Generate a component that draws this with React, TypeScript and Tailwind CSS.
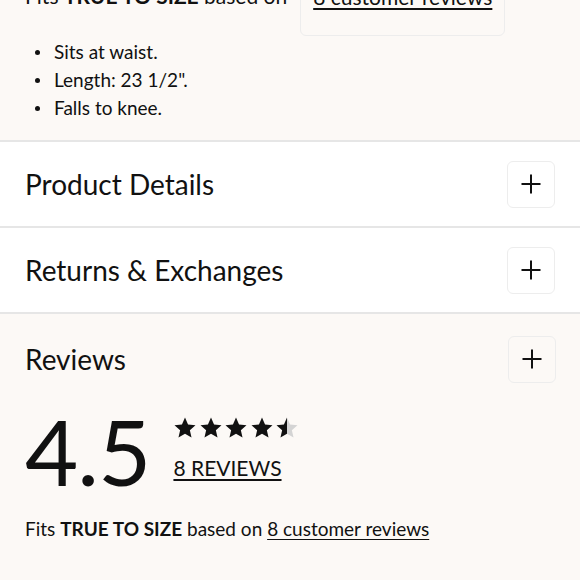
import React from 'react'

const STAR = 'M12 1.6l3.05 6.9 7.45.72-5.63 4.98 1.66 7.36L12 17.7l-6.53 3.86 1.66-7.36L1.5 9.22l7.45-.72z'

function Star({ fill }: { fill: 'full' | 'half' }) {
  return (
    <svg width="24" height="24" viewBox="0 0 24 24" aria-hidden>
      {fill === 'half' ? (
        <>
          <defs>
            <linearGradient id="half-star">
              <stop offset="50%" stopColor="#111111" />
              <stop offset="50%" stopColor="#d4d4d4" />
            </linearGradient>
          </defs>
          <path d={STAR} fill="url(#half-star)" />
        </>
      ) : (
        <path d={STAR} fill="#111111" />
      )}
    </svg>
  )
}

function PlusButton({ tinted }: { tinted?: boolean }) {
  return (
    <button
      className={`flex h-[47px] w-[48px] items-center justify-center rounded-md border border-[#ededed] ${
        tinted ? 'bg-[#fcf9f6]' : 'bg-white'
      }`}
    >
      <svg width="22" height="22" viewBox="0 0 22 22" aria-hidden>
        <path d="M11 1.5v19M1.5 11h19" stroke="#111111" strokeWidth="2" />
      </svg>
    </button>
  )
}

function AccordionRow({ title }: { title: string }) {
  return (
    <div className="flex h-[86px] items-center justify-between border-b-2 border-[#e6e6e6] bg-white pl-[25px] pr-[25px]">
      <span className="mt-[-1px] text-[28px] leading-none">{title}</span>
      <PlusButton />
    </div>
  )
}

export default function App() {
  const bullets = ['Sits at waist.', 'Length: 23 1/2".', 'Falls to knee.']

  return (
    <div className="h-[580px] w-[580px] overflow-hidden bg-[#fcf9f6] text-[#111111] [font-family:Lato,'Noto_Sans',sans-serif]">
      <div className="border-b-2 border-[#e6e6e6] px-[25px] pb-[18px]">
        <div className="-mt-[18px] flex items-start text-[21px] leading-[28px]">
          <span>
            Fits <b className="font-bold">TRUE TO SIZE</b> based on
          </span>
          <div className="ml-[13px] h-[54px] rounded-md border border-[#ededed] px-[12px]">
            <span className="underline underline-offset-[3px]">8 customer reviews</span>
          </div>
        </div>
        <ul className="mt-[2px] text-[19px]">
          {bullets.map((b) => (
            <li key={b} className="flex h-[28px] items-center gap-[14px] pl-[10px]">
              <span className="h-[5px] w-[5px] rounded-full bg-[#111111]" aria-hidden />
              {b}
            </li>
          ))}
        </ul>
      </div>

      <AccordionRow title="Product Details" />
      <AccordionRow title="Returns & Exchanges" />

      <div className="px-[25px] pt-[22px]">
        <div className="flex h-[46px] items-center justify-between">
          <span className="text-[28px] leading-none">Reviews</span>
          <div className="mr-[-1px]">
            <PlusButton tinted />
          </div>
        </div>

        <div className="mt-[23px] flex items-start gap-[23px]">
          <span className="text-[92px] leading-none tracking-[-1px]">4.5</span>
          <div className="mt-[11px] flex flex-col items-start">
            <div className="flex gap-[1.5px]">
              <Star fill="full" />
              <Star fill="full" />
              <Star fill="full" />
              <Star fill="full" />
              <Star fill="half" />
            </div>
            <a className="mt-[14px] text-[21px] leading-[28px] underline underline-offset-[3px]">8 REVIEWS</a>
          </div>
        </div>

        <p className="mt-[18px] text-[19px] leading-[28px]">
          Fits <b className="font-bold">TRUE TO SIZE</b> based on{' '}
          <span className="underline underline-offset-[3px]">8 customer reviews</span>
        </p>
      </div>
    </div>
  )
}
